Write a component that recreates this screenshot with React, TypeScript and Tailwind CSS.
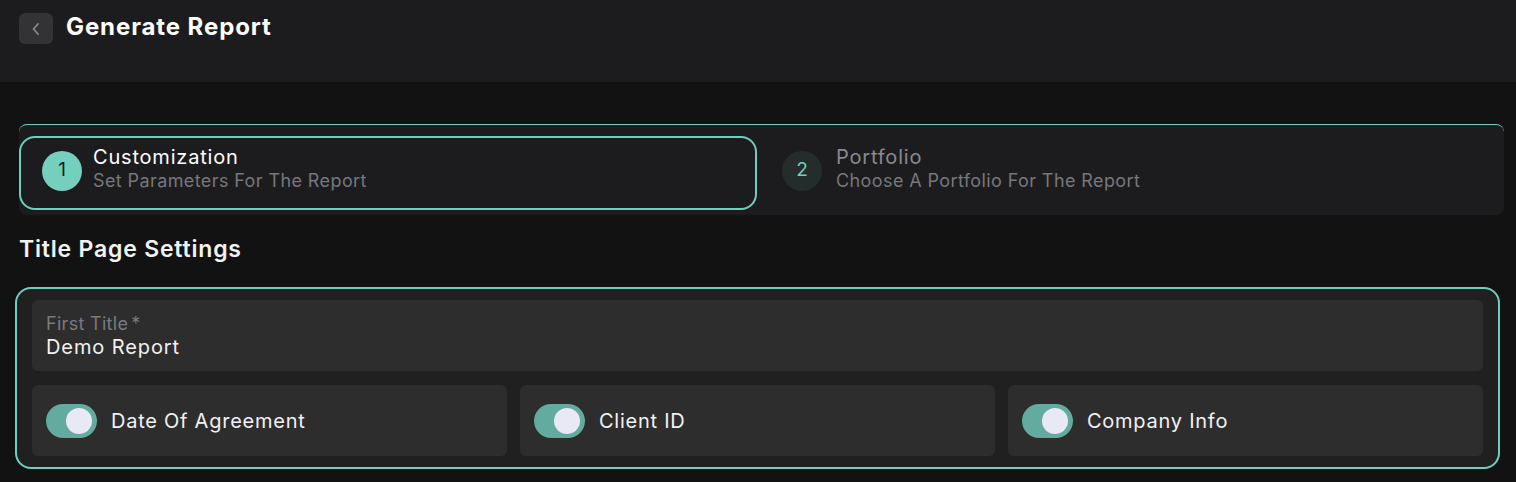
import React from "react";

function Toggle() {
  return (
    <div className="w-[51px] h-[34px] rounded-full bg-[#64ab9f] flex items-center justify-end pr-[5px] shrink-0">
      <div className="w-[26px] h-[26px] rounded-full bg-[#e8e9f5]" />
    </div>
  );
}

function ToggleBox({ label }: { label: string }) {
  return (
    <div className="flex-1 h-[71px] bg-[#2d2d2d] rounded-[6px] flex items-center pl-[14px] gap-[14px]">
      <Toggle />
      <span className="text-[20px] tracking-[0.75px] text-[#f2f2f2]">{label}</span>
    </div>
  );
}

export default function App() {
  return (
    <div
      className="w-[1516px] h-[482px] bg-[#121212] overflow-hidden"
      style={{ fontFamily: "Inter, 'Noto Sans', sans-serif" }}
    >
      <header className="h-[82px] bg-[#1c1c1e] flex items-start pt-[13px] pl-[19px] gap-[13px]">
        <button className="w-[34px] h-[31px] rounded-[6px] bg-[#333336] flex items-center justify-center">
          <svg width="12" height="14" viewBox="0 0 12 14" fill="none">
            <path d="M8 2 L3.5 7 L8 12" stroke="#8a8a90" strokeWidth="1.7" strokeLinecap="round" strokeLinejoin="round" />
          </svg>
        </button>
        <h1 className="text-[24px] font-bold tracking-[0.9px] text-white leading-[28px]">Generate Report</h1>
      </header>

      <div className="px-[19px] pt-[42px]">
        <div className="w-[1485px] h-[91px] bg-[#1c1c1e] rounded-[8px] border-t border-[#6fcfbf] flex items-start pt-[11px] gap-[4px]">
          <div className="w-[738px] h-[74px] border-2 border-[#6fcfbf] rounded-[16px] flex items-center pl-[21px] gap-[11px] pb-[9px]">
            <div className="w-[40px] h-[40px] mt-[4px] rounded-full bg-[#74cfbd] flex items-center justify-center text-[19px] text-[#1a1a1a]">1</div>
            <div className="flex flex-col">
              <span className="text-[20px] tracking-[0.8px] text-white leading-[24px]">Customization</span>
              <span className="text-[18px] tracking-[0.4px] text-[#77777c] leading-[24px]">Set Parameters For The Report</span>
            </div>
          </div>
          <div className="flex-1 h-[74px] flex items-center pl-[21px] gap-[14px] pb-[9px]">
            <div className="w-[40px] h-[40px] mt-[4px] rounded-full bg-[#242c2c] flex items-center justify-center text-[19px] text-[#74cfbd]">2</div>
            <div className="flex flex-col">
              <span className="text-[20px] tracking-[0.8px] text-[#8a8a8f] leading-[24px]">Portfolio</span>
              <span className="text-[18px] tracking-[0.4px] text-[#77777c] leading-[24px]">Choose A Portfolio For The Report</span>
            </div>
          </div>
        </div>

        <h2 className="text-[23px] font-semibold tracking-[0.8px] text-[#f2f2f2] mt-[20px] leading-[28px]">Title Page Settings</h2>
      </div>

      <div className="ml-[15px] mt-[24px] w-[1485px] h-[182px] border-2 border-[#6fcfbf] rounded-[16px] bg-[#202020] py-[11px] px-[15px] flex flex-col gap-[14px]">
        <div className="h-[71px] bg-[#2d2d2d] rounded-[6px] px-[14px] pt-[13px] flex flex-col">
          <span className="text-[18px] tracking-[0.3px] text-[#7a7a7e] leading-[22px]">
            First Title<span className="ml-[3px]">*</span>
          </span>
          <span className="text-[20px] tracking-[0.9px] text-[#f2f2f2] leading-[24px]">Demo Report</span>
        </div>
        <div className="flex gap-[13px]">
          <ToggleBox label="Date Of Agreement" />
          <ToggleBox label="Client ID" />
          <ToggleBox label="Company Info" />
        </div>
      </div>
    </div>
  );
}
